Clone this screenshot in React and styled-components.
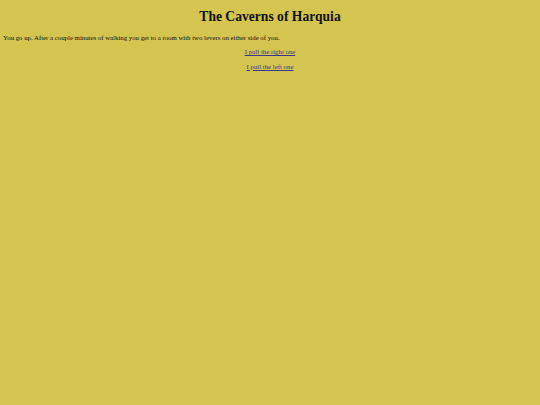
import styled, { createGlobalStyle } from "styled-components";

const Global = createGlobalStyle`
  html, body {
    background: #d4c450;
  }
  body {
    margin: 3px;
    font-family: "Liberation Serif", "Times New Roman", serif;
    font-size: 6.8px;
    color: #111;
  }
`;

const Title = styled.h1`
  text-align: center;
  font-size: 13.6px;
  font-weight: bold;
  margin: 6px 0 9px;
`;

const Text = styled.p`
  margin: 7.3px 0;
`;

const Choice = styled.p`
  margin: 7.3px 0;
  text-align: center;
`;

const Link = styled.a`
  color: #3a3590;
  text-decoration: underline;
`;

const choices = ["I pull the right one", "I pull the left one"];

export default function App() {
  return (
    <>
      <Global />
      <Title>The Caverns of Harquia</Title>
      <Text>
        You go up. After a couple minutes of walking you get to a room with two levers on either side of you.
      </Text>
      {choices.map((c) => (
        <Choice key={c}>
          <Link href="#">{c}</Link>
        </Choice>
      ))}
    </>
  );
}
